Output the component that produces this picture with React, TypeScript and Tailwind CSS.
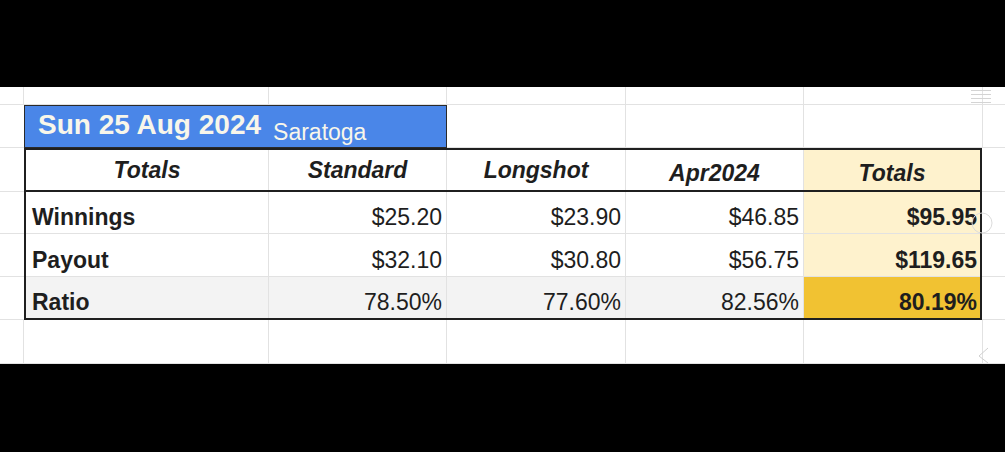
import React from "react";

const font = { fontFamily: '"Liberation Sans", Arial, sans-serif' };

const grid = "border-[#e2e2e2]";

type Row = {
  label: string;
  values: string[];
  total: string;
  shade?: boolean;
};

const rows: Row[] = [
  { label: "Winnings", values: ["$25.20", "$23.90", "$46.85"], total: "$95.95" },
  { label: "Payout", values: ["$32.10", "$30.80", "$56.75"], total: "$119.65" },
  { label: "Ratio", values: ["78.50%", "77.60%", "82.56%"], total: "80.19%", shade: true },
];

const rowHeights = ["h-[42px]", "h-[43px]", "h-[41px]"];
const sideHeights = ["h-[44px]", "h-[42px]", "h-[43px]", "h-[43px]"];

function GridRow({ h }: { h: string }) {
  return (
    <div className={`flex ${h}`}>
      <div className={`w-[24px] border-r border-b ${grid}`} />
      <div className={`w-[245px] border-r border-b ${grid}`} />
      <div className={`w-[178px] border-r border-b ${grid}`} />
      <div className={`w-[179px] border-r border-b ${grid}`} />
      <div className={`w-[178px] border-r border-b ${grid}`} />
      <div className={`w-[179px] border-r border-b ${grid}`} />
      <div className={`flex-1 border-b ${grid}`} />
    </div>
  );
}

function SideColumn({ w }: { w: string }) {
  return (
    <div className={`flex flex-col ${w}`}>
      {sideHeights.map((h, i) => (
        <div key={i} className={`${h} border-b ${grid}`} />
      ))}
    </div>
  );
}

export default function App() {
  return (
    <div className="relative flex h-[452px] w-[1005px] flex-col bg-black text-[#1e1e1e]" style={font}>
      <div className="h-[87px] shrink-0" />

      <div className="flex h-[277px] shrink-0 flex-col bg-white">
        <GridRow h="h-[18px]" />

        {/* title band */}
        <div className="flex h-[43px]">
          <div className={`w-[24px] border-b ${grid}`} />
          <div className="flex w-[423px] items-end border border-[#2a2a2a] bg-[#4a86e8] text-[#f8f6ea]">
            <span className="pb-[8px] pl-[13px] text-[28px] font-bold leading-none">Sun 25 Aug 2024</span>
            <span className="pb-[3px] pl-[12px] text-[23px] leading-none">Saratoga</span>
          </div>
          <div className={`w-[179px] border-r border-b ${grid}`} />
          <div className={`w-[178px] border-r border-b ${grid}`} />
          <div className={`w-[179px] border-r border-b ${grid}`} />
          <div className={`flex-1 border-b ${grid}`} />
        </div>

        <div className="flex h-[172px]">
          <SideColumn w="w-[24px]" />

          <div className="flex w-[958px] flex-col border-2 border-[#1f1f1f]">
            {/* header */}
            <div className="flex h-[42px] border-b-2 border-[#1f1f1f] text-[23px] font-bold italic leading-none">
              <div className={`flex w-[243px] items-center justify-center border-r ${grid}`}>Totals</div>
              <div className={`flex w-[178px] items-center justify-center border-r ${grid}`}>Standard</div>
              <div className={`flex w-[179px] items-center justify-center border-r ${grid}`}>Longshot</div>
              <div className={`flex w-[178px] items-end justify-center border-r pb-[5px] ${grid}`}>Apr2024</div>
              <div className="flex w-[176px] items-end justify-center bg-[#fef2cd] pb-[5px]">Totals</div>
            </div>

            {rows.map((r, i) => (
              <div
                key={r.label}
                className={`flex ${rowHeights[i]} text-[23px] leading-none ${
                  i < rows.length - 1 ? `border-b ${grid}` : ""
                } ${r.shade ? "bg-[#f3f3f3]" : ""}`}
              >
                <div className={`flex w-[243px] items-end border-r pb-[4px] pl-[6px] font-bold ${grid}`}>
                  {r.label}
                </div>
                {r.values.map((v, j) => (
                  <div
                    key={j}
                    className={`flex ${j === 1 ? "w-[179px]" : "w-[178px]"} items-end justify-end border-r pb-[4px] pr-[4px] ${grid}`}
                  >
                    {v}
                  </div>
                ))}
                <div
                  className={`flex w-[176px] items-end justify-end pb-[4px] pr-[3px] font-bold ${
                    r.shade ? "bg-[#f1c232]" : "bg-[#fef2cd]"
                  }`}
                >
                  {r.total}
                </div>
              </div>
            ))}
          </div>

          <SideColumn w="flex-1" />
        </div>

        <GridRow h="h-[44px]" />
      </div>

      <div className="flex-1" />

      {/* faint screen overlays at the right edge */}
      <svg className="absolute left-[970px] top-[88px]" width="22" height="17" viewBox="0 0 22 17">
        <g stroke="#d4d4d4" strokeWidth="1">
          <line x1="1" y1="2.5" x2="21" y2="2.5" />
          <line x1="1" y1="6.5" x2="21" y2="6.5" />
          <line x1="1" y1="10.5" x2="21" y2="10.5" />
          <line x1="1" y1="14.5" x2="21" y2="14.5" />
        </g>
      </svg>
      <svg className="absolute left-[970px] top-[211px]" width="24" height="24" viewBox="0 0 24 24">
        <circle cx="12" cy="12" r="10" fill="none" stroke="#dcdcdc" strokeWidth="1" />
      </svg>
      <svg className="absolute left-[976px] top-[346px]" width="14" height="18" viewBox="0 0 14 18">
        <polyline points="12,2 3,10 12,17" fill="none" stroke="#d0d0d0" strokeWidth="1" />
      </svg>
    </div>
  );
}
